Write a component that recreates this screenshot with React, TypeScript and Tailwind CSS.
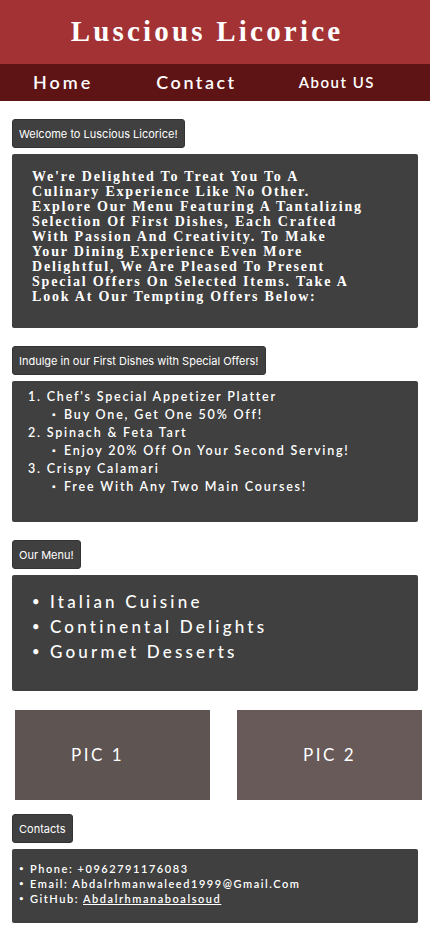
import React from 'react';

const serif = "font-['Liberation_Serif','DejaVu_Serif',serif]";
const sans = "font-['Lato','Liberation_Sans',sans-serif]";
const inter = "font-['Inter','Liberation_Sans',sans-serif]";

const Label: React.FC<{ text: string }> = ({ text }) => (
    <div className={`inline-block ml-3 px-[6px] h-[29px] leading-[29px] bg-[#404040] text-white text-[11px] rounded-[3px] border border-[#333] ${inter}`}>
        {text}
    </div>
);

const offers = [
    { dish: "Chef's Special Appetizer Platter", deal: 'Buy One, Get One 50% Off!' },
    { dish: 'Spinach & Feta Tart', deal: 'Enjoy 20% Off On Your Second Serving!' },
    { dish: 'Crispy Calamari', deal: 'Free With Any Two Main Courses!' },
];

const menu = ['Italian Cuisine', 'Continental Delights', 'Gourmet Desserts'];

export default function App() {
    return (
        <div className="w-[430px] min-h-[932px] bg-white">
            {/* header */}
            <header className="bg-[#a33235] h-[64px] flex items-center justify-center pr-[16px]">
                <h1 className={`text-white text-[29px] font-bold tracking-[3.2px] ${serif}`}>Luscious Licorice</h1>
            </header>
            <nav className={`bg-[#5e1414] h-[37px] flex items-center pl-[33px] text-white ${sans}`}>
                <span className="text-[18px] tracking-[3px] font-semibold">Home</span>
                <span className="ml-[63px] text-[18px] tracking-[2.5px] font-semibold">Contact</span>
                <span className="ml-[62px] text-[15px] tracking-[1.5px] font-semibold">About US</span>
            </nav>

            <main className="pt-[18px]">
                <Label text="Welcome to Luscious Licorice!" />
                <div className={`mx-3 mt-[6px] bg-[#404040] rounded-[2px] pl-[20px] pr-4 pt-[15px] pb-[24px] text-white text-[14px] leading-[15px] font-bold tracking-[1.8px] ${serif}`}>
                    We're Delighted To Treat You To A<br />
                    Culinary Experience Like No Other.<br />
                    Explore Our Menu Featuring A Tantalizing<br />
                    Selection Of First Dishes, Each Crafted<br />
                    With Passion And Creativity. To Make<br />
                    Your Dining Experience Even More<br />
                    Delightful, We Are Pleased To Present<br />
                    Special Offers On Selected Items. Take A<br />
                    Look At Our Tempting Offers Below:
                </div>

                <div className="mt-[18px]">
                    <Label text="Indulge in our First Dishes with Special Offers!" />
                </div>
                <div className={`mx-3 mt-[6px] h-[141px] bg-[#404040] rounded-[2px] pl-[16px] pt-[7px] text-white text-[12.5px] leading-[18px] tracking-[1.8px] font-semibold ${sans}`}>
                    {offers.map((o, i) => (
                        <div key={o.dish}>
                            <div>{i + 1}. {o.dish}</div>
                            <div className="pl-[24px] flex">
                                <span className="w-[12px] text-[9px]">▪</span>
                                <span>{o.deal}</span>
                            </div>
                        </div>
                    ))}
                </div>

                <div className="mt-[18px]">
                    <Label text="Our Menu!" />
                </div>
                <div className={`mx-3 mt-[6px] h-[116px] bg-[#404040] rounded-[2px] pl-[20px] pt-[14px] text-white text-[17px] leading-[25px] tracking-[3.2px] font-medium ${sans}`}>
                    {menu.map((m) => (
                        <div key={m} className="flex">
                            <span className="w-[18px] text-[13px]">•</span>
                            <span>{m}</span>
                        </div>
                    ))}
                </div>

                {/* pictures */}
                <div className={`mt-[19px] flex pl-[15px] text-white text-[17px] tracking-[2.5px] ${sans}`}>
                    <div className="w-[195px] h-[90px] bg-[#5e5452] flex items-center pl-[56px]">PIC 1</div>
                    <div className="ml-[27px] w-[185px] h-[90px] bg-[#675a59] flex items-center justify-center">PIC 2</div>
                </div>

                <div className="mt-[14px]">
                    <Label text="Contacts" />
                </div>
                <div className={`mx-3 mt-[6px] h-[74px] bg-[#404040] rounded-[2px] pl-[7px] pt-[12px] text-white text-[11px] leading-[15px] tracking-[1.55px] font-semibold ${sans}`}>
                    <div className="flex"><span className="w-[11px] text-[8px]">•</span><span>Phone: +0962791176083</span></div>
                    <div className="flex"><span className="w-[11px] text-[8px]">•</span><span>Email: Abdalrhmanwaleed1999@Gmail.Com</span></div>
                    <div className="flex"><span className="w-[11px] text-[8px]">•</span><span>GitHub: <span className="underline">Abdalrhmanaboalsoud</span></span></div>
                </div>
            </main>
        </div>
    );
}
